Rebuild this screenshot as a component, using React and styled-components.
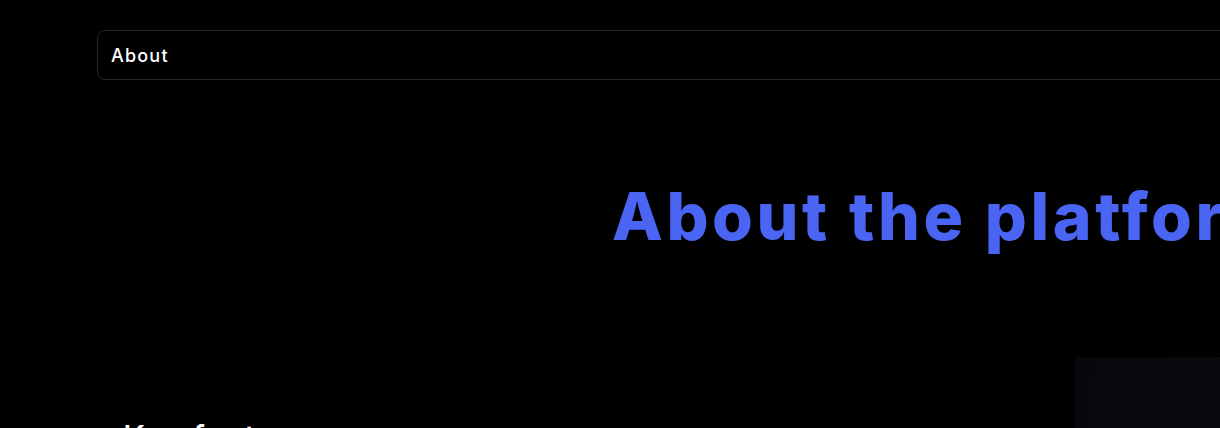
import React from 'react';
import styled, { createGlobalStyle } from "styled-components";

const GlobalStyle = createGlobalStyle`
    html, body {
        margin: 0;
        padding: 0;
        background: #000;
        overflow: hidden;
    }
    body {
        font-family: "Inter", "Noto Sans", sans-serif;
        color: #fff;
    }
`

const App = () => {
    return (
        <Page>
            <GlobalStyle />
            <TopBar>
                <TopBarLabel>About</TopBarLabel>
            </TopBar>

            <Hero>
                <HeroTitle>About the platform</HeroTitle>
            </Hero>

            <Features>
                <FeaturesText>
                    <FeaturesTitle>Key features</FeaturesTitle>
                </FeaturesText>
                <FeatureCard />
            </Features>
        </Page>
    )
}

const Page = styled.div`
    width: 1600px;
    display: flex;
    flex-direction: column;
`

const TopBar = styled.div`
    flex-shrink: 0;
    margin: 30px 0 0 97px;
    width: 1400px;
    height: 50px;
    box-sizing: border-box;
    border: 1px solid #27252f;
    border-radius: 8px;
    display: flex;
    align-items: center;
    padding-left: 13px;
`

const TopBarLabel = styled.span`
    font-size: 18px;
    font-weight: 500;
    letter-spacing: 1.2px;
`

const Hero = styled.div`
    flex-shrink: 0;
    padding: 96px 0 0 612px;
`

const HeroTitle = styled.h1`
    margin: 0;
    font-size: 66px;
    line-height: 80px;
    font-weight: 800;
    color: #4a64f4;
    white-space: nowrap;
    letter-spacing: 3.6px;
`

const Features = styled.div`
    flex-shrink: 0;
    margin-top: 101px;
    display: flex;
    align-items: flex-start;
`

const FeaturesText = styled.div`
    flex-shrink: 0;
    width: 1075px;
    padding: 61px 0 0 123px;
    box-sizing: border-box;
`

const FeaturesTitle = styled.h2`
    margin: 0;
    font-size: 32px;
    font-weight: 500;
    line-height: 40px;
    letter-spacing: 1px;
`

const FeatureCard = styled.div`
    flex-shrink: 0;
    width: 460px;
    height: 300px;
    background: linear-gradient(100deg, #07080c 0%, #090c13 50%, #0a111e 100%);
`

export default App;
